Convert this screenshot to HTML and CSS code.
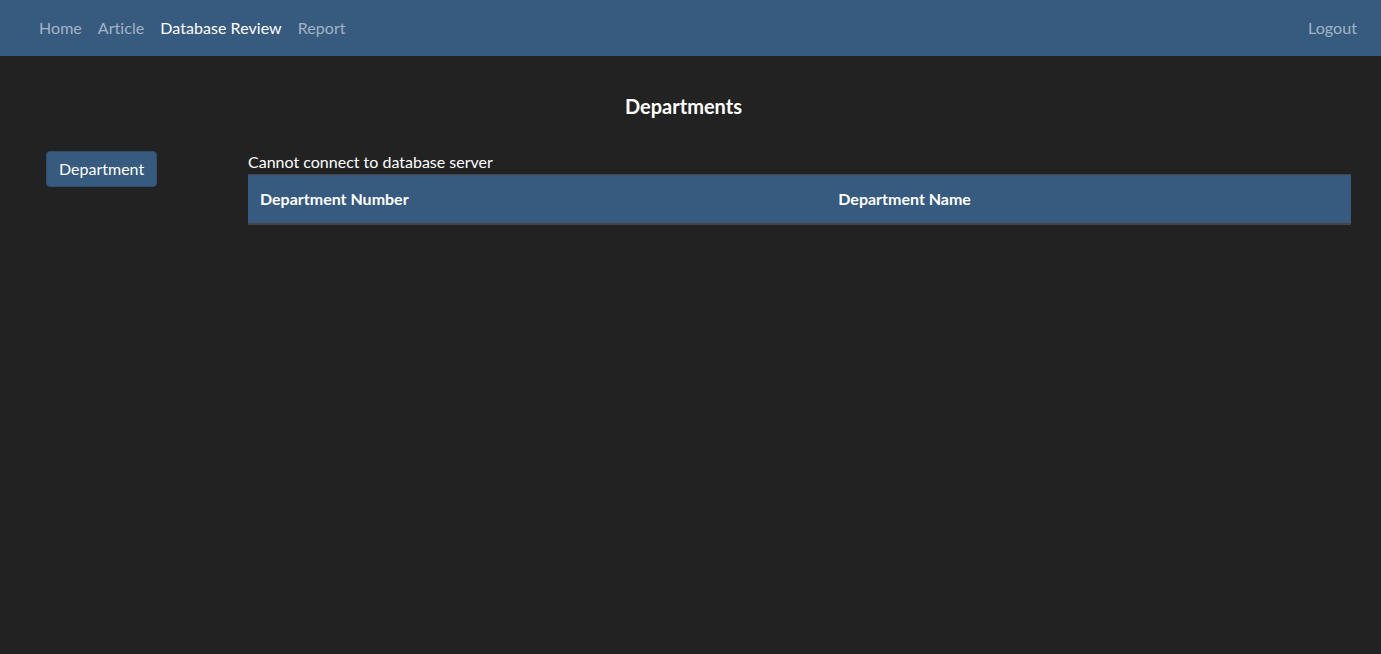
FILE: index.html
```html
<!DOCTYPE html>
<html lang="en">
<head>
<meta charset="utf-8">
<title>Departments</title>
<link rel="stylesheet" href="styles.css">
</head>
<body>
<nav class="navbar">
  <ul class="nav-links">
    <li><a class="nav-link" href="#">Home</a></li>
    <li><a class="nav-link" href="#">Article</a></li>
    <li><a class="nav-link active" href="#">Database Review</a></li>
    <li><a class="nav-link" href="#">Report</a></li>
  </ul>
  <a class="nav-link" href="#">Logout</a>
</nav>
<main class="page">
  <h5 class="title">Departments</h5>
  <div class="row">
    <aside class="sidebar">
      <button class="btn">Department</button>
    </aside>
    <section class="content">
      <p class="message">Cannot connect to database server</p>
      <table class="table">
        <thead>
          <tr>
            <th>Department Number</th>
            <th>Department Name</th>
          </tr>
        </thead>
        <tbody></tbody>
      </table>
    </section>
  </div>
</main>
</body>
</html>
```
FILE: styles.css
```css
* { box-sizing: border-box; }
html, body { margin: 0; padding: 0; }
body {
  background: #222222;
  color: #ffffff;
  font-family: Lato, "Liberation Sans", sans-serif;
  font-size: 16px;
  line-height: 1.5;
}
.navbar {
  height: 56px;
  background: #375a7f;
  display: flex;
  align-items: center;
  justify-content: space-between;
  padding: 0 16px 0 31px;
}
.nav-links {
  list-style: none;
  margin: 0;
  padding: 0;
  display: flex;
}
.nav-link {
  display: block;
  padding: 8px 8px;
  color: rgba(255,255,255,0.55);
  text-decoration: none;
  font-size: 16px;
  letter-spacing: 0.05px;
}
.nav-link.active { color: #ffffff; }
.page {
  padding: 38px 30px 0 16px;
}
.title {
  margin: 0;
  text-align: center;
  font-size: 20px;
  font-weight: 700;
  line-height: 24px;
}
.row {
  display: flex;
  margin-top: 32px;
}
.sidebar {
  width: 232px;
  flex: none;
  padding: 1px 0 0 30px;
}
.btn {
  font-family: inherit;
  font-size: 16px;
  line-height: 24px;
  color: #ffffff;
  background: #375a7f;
  border: 1px solid #2f4d6c;
  border-radius: 4px;
  padding: 5px 12px;
  cursor: pointer;
}
.content { flex: 1; }
.message {
  margin: 0;
  line-height: 24px;
}
.table {
  width: 100%;
  border-collapse: collapse;
}
.table th {
  text-align: left;
  background: #375a7f;
  font-weight: 700;
  padding: 12px 12px;
  line-height: 24px;
  border-top: 1px solid #444444;
  border-bottom: 2px solid #444444;
}
```
